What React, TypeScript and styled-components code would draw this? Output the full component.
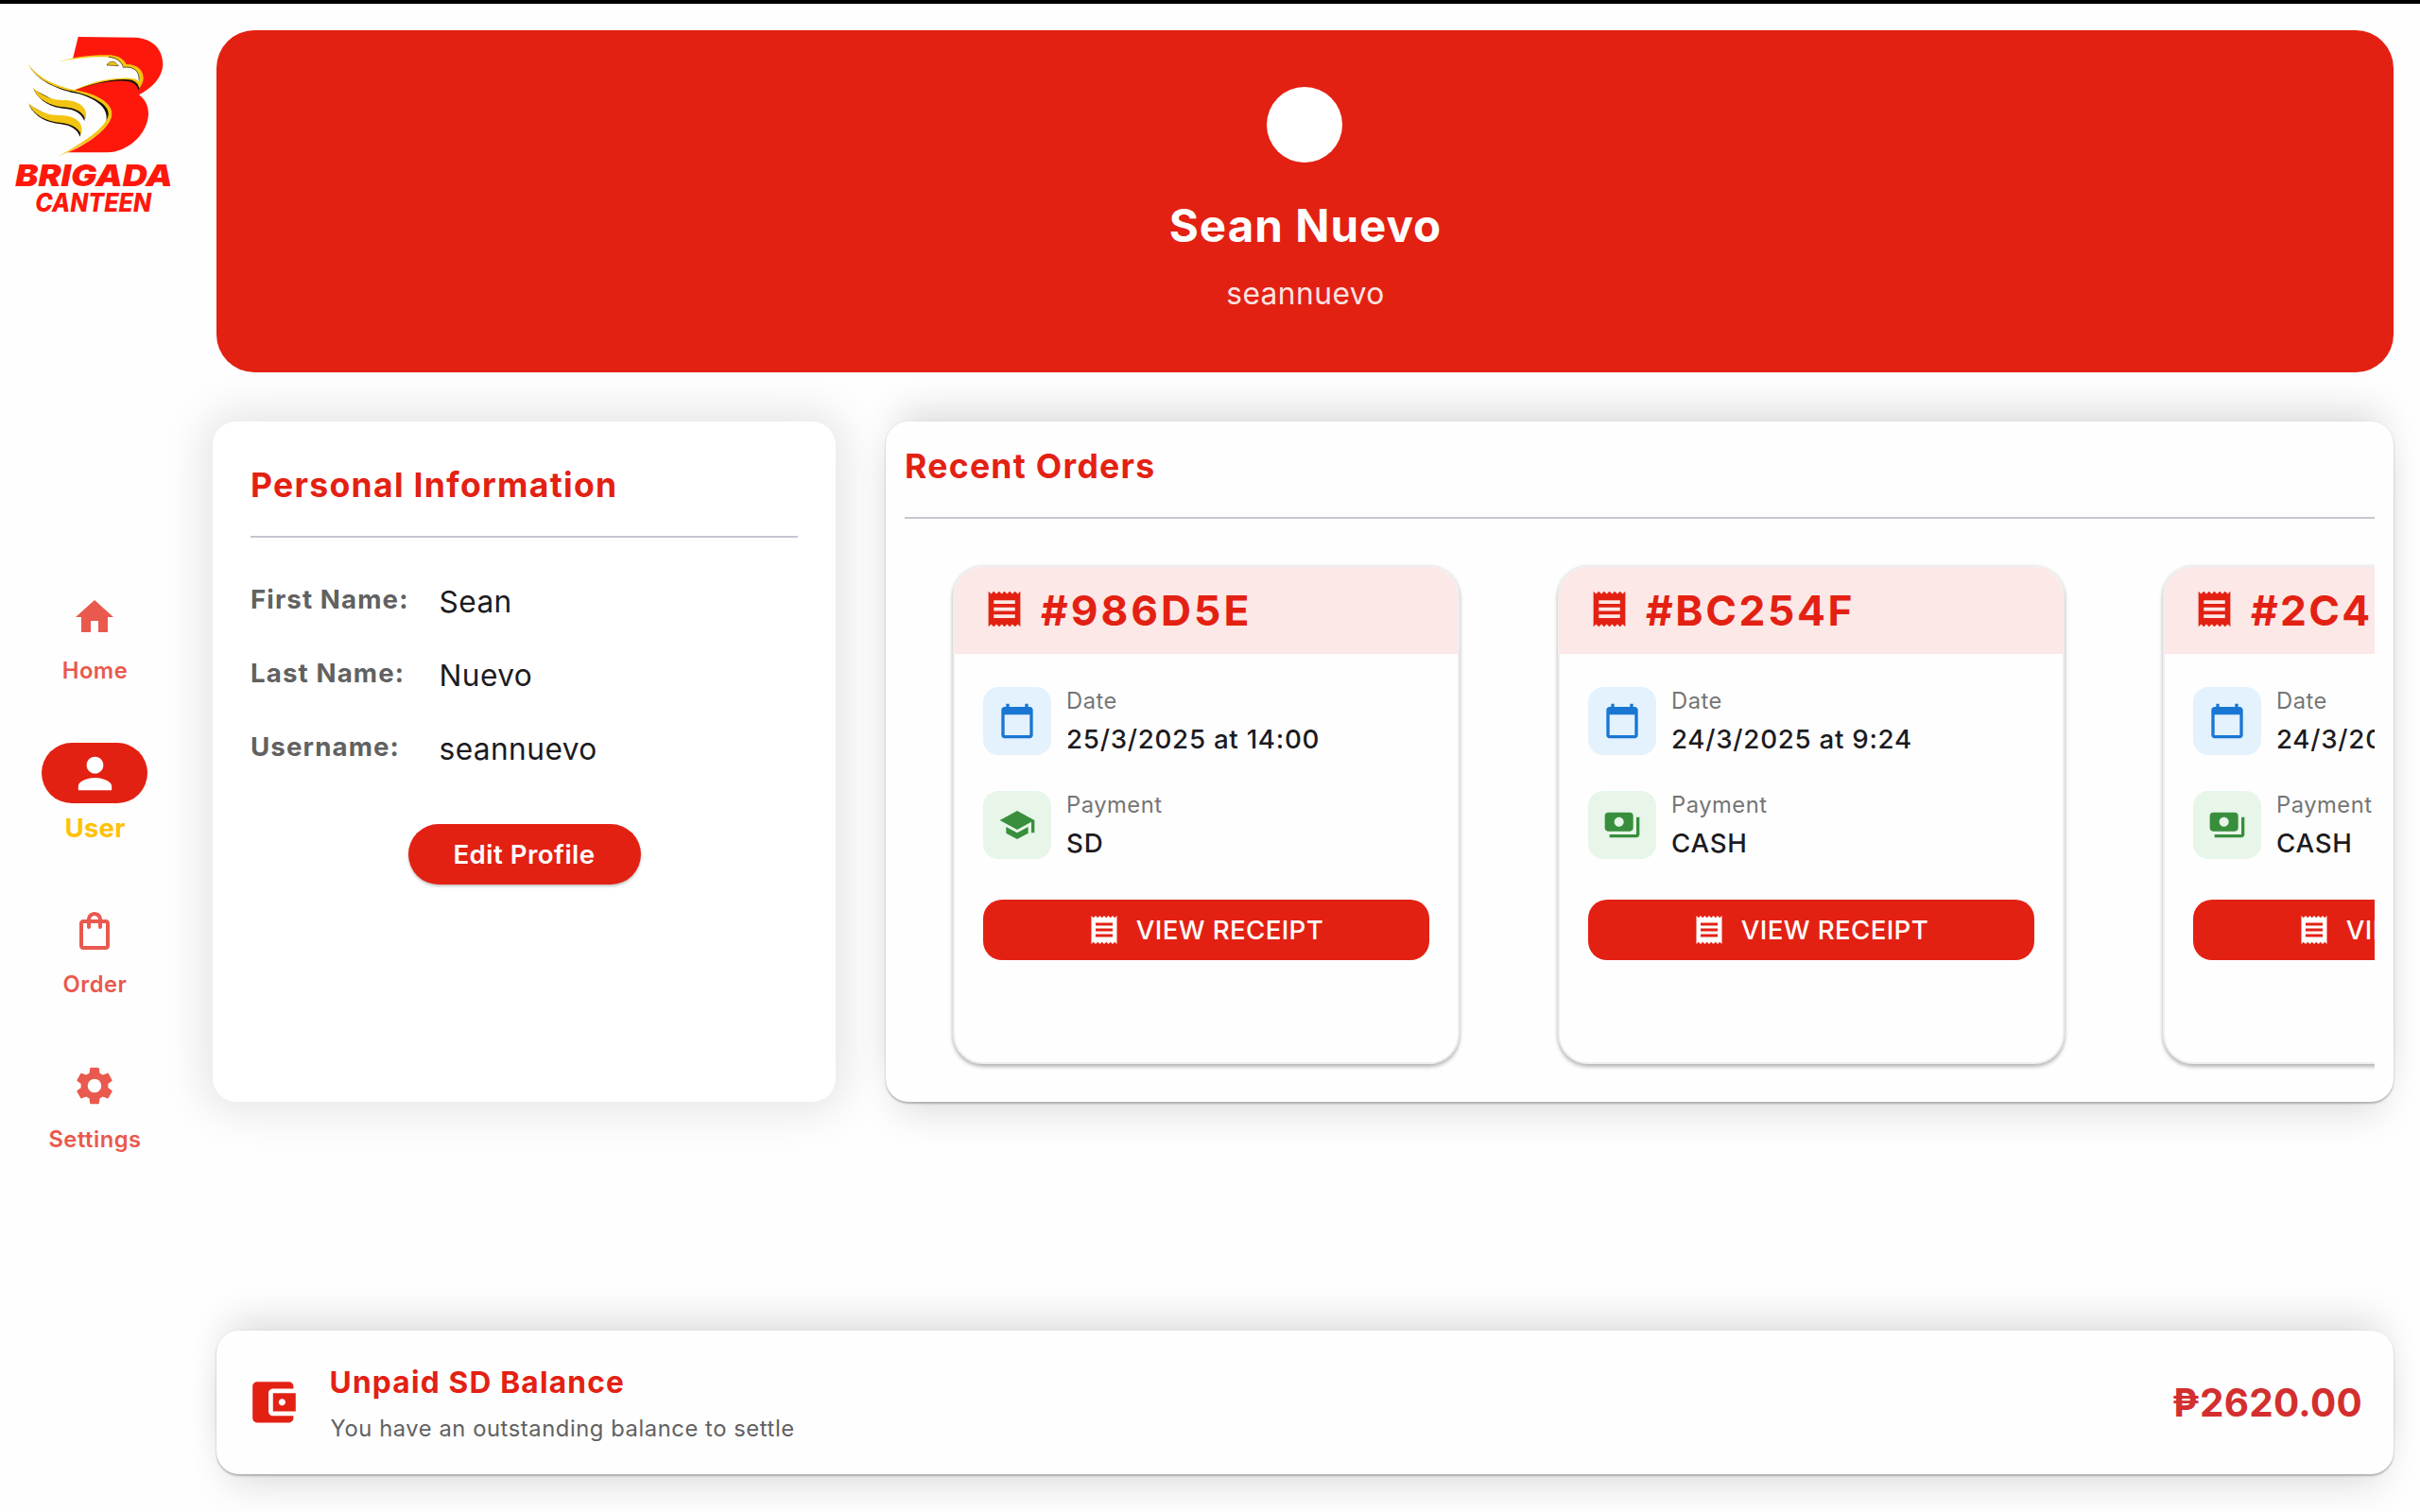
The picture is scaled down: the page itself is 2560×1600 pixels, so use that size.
import React from "react";
import styled, { createGlobalStyle, css } from "styled-components";

const RED = "#e32113";

const GlobalStyle = createGlobalStyle`
  *, *::before, *::after { box-sizing: border-box; }
  body {
    margin: 0;
    background: #fefefe;
    font-family: Inter, "Liberation Sans", sans-serif;
    color: #1c1b1f;
    font-kerning: normal;
  }
  p, h1, h2, h3 { margin: 0; }
`;

/* ---------- icons ---------- */

const icons = {
  home: "M10 20v-6h4v6h5v-8h3L12 3 2 12h3v8z",
  person:
    "M12 12c2.21 0 4-1.79 4-4s-1.79-4-4-4-4 1.79-4 4 1.79 4 4 4zm0 2c-2.67 0-8 1.34-8 4v2h16v-2c0-2.66-5.33-4-8-4z",
  bag: "M18 6h-2c0-2.21-1.79-4-4-4S8 3.79 8 6H6c-1.1 0-2 .9-2 2v12c0 1.1.9 2 2 2h12c1.1 0 2-.9 2-2V8c0-1.1-.9-2-2-2zm-6-2c1.1 0 2 .9 2 2h-4c0-1.1.9-2 2-2zm6 16H6V8h2v2c0 .55.45 1 1 1s1-.45 1-1V8h4v2c0 .55.45 1 1 1s1-.45 1-1V8h2v12z",
  settings:
    "M19.14 12.94c.04-.3.06-.61.06-.94 0-.32-.02-.64-.07-.94l2.03-1.58c.18-.14.23-.41.12-.61l-1.92-3.32c-.12-.22-.37-.29-.59-.22l-2.39.96c-.5-.38-1.03-.7-1.62-.94l-.36-2.54c-.04-.24-.24-.41-.48-.41h-3.84c-.24 0-.43.17-.47.41l-.36 2.54c-.59.24-1.13.57-1.62.94l-2.39-.96c-.22-.08-.47 0-.59.22L2.74 8.87c-.12.21-.08.47.12.61l2.03 1.58c-.05.3-.09.63-.09.94s.02.64.07.94l-2.03 1.58c-.18.14-.23.41-.12.61l1.92 3.32c.12.22.37.29.59.22l2.39-.96c.5.38 1.03.7 1.62.94l.36 2.54c.05.24.24.41.48.41h3.84c.24 0 .44-.17.47-.41l.36-2.54c.59-.24 1.13-.56 1.62-.94l2.39.96c.22.08.47 0 .59-.22l1.92-3.32c.12-.22.07-.47-.12-.61l-2.01-1.58zM12 15.6c-1.98 0-3.6-1.62-3.6-3.6s1.62-3.6 3.6-3.6 3.6 1.62 3.6 3.6-1.62 3.6-3.6 3.6z",
  receipt:
    "M18 17H6v-2h12v2zm0-4H6v-2h12v2zm0-4H6V7h12v2zM3 22l1.5-1.5L6 22l1.5-1.5L9 22l1.5-1.5L12 22l1.5-1.5L15 22l1.5-1.5L18 22l1.5-1.5L21 22V2l-1.5 1.5L18 2l-1.5 1.5L15 2l-1.5 1.5L12 2l-1.5 1.5L9 2 7.500 3.500 6 2 4.500 3.500 3 2v20z",
  calendar:
    "M20 3h-1V1h-2v2H7V1H5v2H4c-1.1 0-2 .9-2 2v16c0 1.1.9 2 2 2h16c1.1 0 2-.9 2-2V5c0-1.1-.9-2-2-2zm0 18H4V8h16v13z",
  school:
    "M5 13.18v4L12 21l7-3.82v-4L12 17l-7-3.82zM12 3L1 9l11 6 9-4.91V17h2V9L12 3z",
  payments:
    "M19 14V6c0-1.1-.9-2-2-2H3c-1.1 0-2 .9-2 2v8c0 1.1.9 2 2 2h14c1.1 0 2-.9 2-2zm-9-1c-1.66 0-3-1.34-3-3s1.34-3 3-3 3 1.34 3 3-1.34 3-3 3zm13-6v11c0 1.1-.9 2-2 2H4v-2h17V7h2z",
  wallet:
    "M21 18v1c0 1.1-.9 2-2 2H5c-1.11 0-2-.9-2-2V5c0-1.1.89-2 2-2h14c1.1 0 2 .9 2 2v1h-9c-1.11 0-2 .9-2 2v8c0 1.1.89 2 2 2h9zm-9-2h10V8H12v8zm4-2.5c-.83 0-1.5-.67-1.5-1.500s.67-1.5 1.500-1.500 1.500.67 1.500 1.500-.67 1.500-1.500 1.500z",
};

type IconName = keyof typeof icons;

const Glyph = styled.svg<{ $size: number }>`
  display: block;
  flex: none;
  width: ${(p) => p.$size}px;
  height: ${(p) => p.$size}px;
  fill: currentColor;
`;

const Icon = ({ name, size }: { name: IconName; size: number }) => (
  <Glyph $size={size} viewBox="0 0 24 24" aria-hidden>
    <path d={icons[name]} />
  </Glyph>
);

/* ---------- shell ---------- */

const Screen = styled.div`
  display: flex;
  width: 2560px;
  height: 1600px;
  overflow: hidden;
  border-top: 4px solid #000;
  background: #fefefe;
`;

const Sidebar = styled.aside`
  display: flex;
  flex-direction: column;
  align-items: center;
  flex: none;
  width: 200px;
`;

const Main = styled.main`
  display: flex;
  flex-direction: column;
  flex: none;
  width: 2303px;
  margin-left: 29px;
  padding-top: 28px;
`;

/* ---------- logo ---------- */

const LogoArt = styled.svg`
  display: block;
  flex: none;
  width: 200px;
  height: 236px;
`;

const LogoText = styled.text`
  font-family: Inter, "Liberation Sans", sans-serif;
  font-style: italic;
  fill: #fe180c;
`;

const Logo = () => (
  <LogoArt viewBox="0 12 600 708" role="img" aria-label="Brigada Canteen">
    {/* the red letter B */}
    <path
      fill="#fe180c"
      d="M248 117 L430 119 C486 122 517 158 517 205 C515 248 482 280 441 301 C462 316 471 338 471 362 C468 428 405 482 340 484 L214 484 C285 455 354 400 354 362 C352 325 300 303 232 287 L231 187 Z"
    />
    {/* eagle head */}
    <path
      fill="#1a1208"
      d="M236 288 C285 268 350 255 395 257 C422 258 434 268 440 287 L445 262 L400 248 L300 262 Z"
    />
    <path
      fill="#f3c512"
      d="M184 197 C235 180 295 173 350 175 C378 177 394 190 401 204 C436 204 457 224 455 252 C453 264 448 272 442 280 C438 262 424 252 398 252 C345 250 285 268 232 288 L225 280 Z"
    />
    <path
      fill="#fefefe"
      d="M190 196 C245 183 305 179 348 182 C372 185 386 198 393 214 C425 212 446 228 441 258 C430 246 400 246 370 249 C315 253 272 270 232 287 C180 272 130 250 86 200 L140 180 Z"
    />
    <path
      fill="none"
      stroke="#1a1208"
      strokeWidth="2"
      d="M345 181 C372 183 386 196 391 214 C424 209 443 226 441 254"
    />
    <path
      fill="#f3c512"
      stroke="#4a3a10"
      strokeWidth="2"
      d="M339 207 C343 198 353 194 364 197 L376 209 Z"
    />
    {/* wing edge */}
    <path
      fill="#1a1208"
      d="M94 212 C130 258 180 278 238 290 C305 304 352 325 346 368 L336 392 C348 345 312 318 250 298 C185 285 128 262 94 212 Z"
    />
    <path
      fill="#f3c512"
      d="M87 201 C125 252 180 274 238 286 C308 298 357 328 355 362 C352 405 285 455 183 497 C262 453 340 405 344 362 C346 333 300 307 238 291 C175 280 118 255 87 201 Z"
    />
    {/* feathers */}
    <path
      fill="#1a1208"
      d="M107 284 C125 322 165 341 205 345 C240 348 258 360 268 384 L270 370 C255 338 225 335 195 330 Z"
    />
    <path
      fill="#f3c512"
      d="M105 278 C130 303 168 319 205 318 C252 318 282 345 271 377 C258 350 235 343 203 340 C160 336 120 318 105 278 Z"
    />
    <path
      fill="#1a1208"
      d="M92 333 C110 371 150 390 192 394 C226 398 244 410 254 434 L257 418 C242 388 210 382 180 380 Z"
    />
    <path
      fill="#f3c512"
      d="M90 326 C116 351 154 367 192 366 C240 367 268 390 258 427 C244 400 222 393 190 389 C147 384 106 366 90 326 Z"
    />
    <LogoText
      x="49"
      y="591"
      fontSize="94"
      fontWeight="900"
      textLength="499"
      lengthAdjust="spacingAndGlyphs"
    >
      BRIGADA
    </LogoText>
    <LogoText
      x="112"
      y="671"
      fontSize="80"
      fontWeight="800"
      textLength="368"
      lengthAdjust="spacingAndGlyphs"
    >
      CANTEEN
    </LogoText>
  </LogoArt>
);

/* ---------- navigation ---------- */

const Nav = styled.nav`
  display: flex;
  flex-direction: column;
  align-items: center;
  gap: 58px;
  margin-top: 381px;
`;

const NavIcon = styled.span`
  display: flex;
  align-items: center;
  justify-content: center;
  width: 112px;
  height: 64px;
  border-radius: 32px;
`;

const NavLabel = styled.span`
  margin-top: 8px;
  padding-left: 1px;
  font-size: 23.75px;
  line-height: 34px;
  font-weight: 600;
  letter-spacing: 0.5px;
`;

const NavItem = styled.a<{ $active?: boolean }>`
  display: flex;
  flex-direction: column;
  align-items: center;
  color: #e9594e;
  ${(p) =>
    p.$active &&
    css`
      margin: 1px 0 -1px;
      color: #ffc107;
      ${NavIcon} {
        background: ${RED};
        color: #fff;
      }
      ${NavLabel} {
        margin-top: 6px;
        font-size: 27.7px;
        line-height: 40px;
        font-weight: 700;
        letter-spacing: 0.15px;
      }
    `}
`;

/* ---------- profile banner ---------- */

const Banner = styled.header`
  display: flex;
  flex-direction: column;
  align-items: center;
  height: 362px;
  padding-top: 60px;
  border-radius: 40px;
  background: ${RED};
  color: #fff;
`;

const Avatar = styled.div`
  width: 80px;
  height: 80px;
  margin-right: 1px;
  border-radius: 50%;
  background: #fff;
`;

const BannerName = styled.h1`
  margin-top: 37px;
  padding-left: 1px;
  font-size: 47.5px;
  line-height: 60px;
  font-weight: 700;
  letter-spacing: 1.03px;
`;

const BannerHandle = styled.p`
  margin-top: 22px;
  padding-left: 1px;
  font-size: 31.7px;
  line-height: 40px;
  letter-spacing: 0.45px;
  color: rgba(255, 255, 255, 0.9);
`;

/* ---------- panels ---------- */

const Columns = styled.div`
  display: flex;
  gap: 53px;
  margin: 52px 0 0 -4px;
`;

const raised = css`
  box-shadow: 0 2px 2px rgba(0, 0, 0, 0.24), 0 0 2px rgba(0, 0, 0, 0.08),
    0 22px 40px -12px rgba(0, 0, 0, 0.14), 0 -22px 40px -12px rgba(0, 0, 0, 0.14);
`;

const InfoPanel = styled.section`
  display: flex;
  flex-direction: column;
  flex: none;
  width: 659px;
  height: 720px;
  padding: 46px 40px 0;
  border-radius: 25px;
  background: #fff;
  box-shadow: 0 0 46px 10px rgba(0, 0, 0, 0.1);
`;

const OrdersPanel = styled.section`
  display: flex;
  flex-direction: column;
  flex: none;
  width: 1595px;
  height: 720px;
  padding: 26px 20px 0;
  border-radius: 24px;
  background: #fefefe;
  ${raised}
`;

const PanelTitle = styled.h2`
  padding-bottom: 31px;
  border-bottom: 2px solid #cac4d0;
  font-size: 35.6px;
  line-height: 44px;
  font-weight: 700;
  letter-spacing: 1.28px;
  color: ${RED};
`;

const FieldList = styled.dl`
  display: grid;
  grid-template-columns: 199.5px 1fr;
  row-gap: 40px;
  margin: 49px 0 0;
`;

const FieldName = styled.dt`
  font-size: 27.7px;
  line-height: 32px;
  font-weight: 700;
  letter-spacing: 1.1px;
  color: #616161;
`;

const FieldValue = styled.dd`
  margin: 0;
  font-size: 31.7px;
  line-height: 38px;
  letter-spacing: 0.4px;
`;

const EditButton = styled.button`
  align-self: center;
  width: 246px;
  height: 64px;
  margin-top: 60px;
  padding: 1px 0 0;
  border: 0;
  border-radius: 32px;
  background: ${RED};
  color: #fff;
  font: 600 27.7px/63px Inter, "Liberation Sans", sans-serif;
  letter-spacing: 0.44px;
  box-shadow: 0 2px 3px rgba(0, 0, 0, 0.24);
`;

/* ---------- orders ---------- */

const OrderStrip = styled.div`
  display: flex;
  gap: 104px;
  padding: 49px 0 26px 51px;
  overflow: hidden;
`;

const OrderCardBox = styled.article`
  flex: none;
  width: 536px;
  height: 528px;
  border: 2px solid #eee;
  border-radius: 32px;
  background: #fefefe;
  overflow: hidden;
  box-shadow: 0 3px 4px rgba(0, 0, 0, 0.26), 0 1px 4px rgba(0, 0, 0, 0.08);
`;

const OrderHead = styled.header`
  display: flex;
  align-items: center;
  gap: 16px;
  height: 92px;
  padding-left: 30px;
  background: #fce8e6;
  color: ${RED};
  ${Glyph} {
    margin-bottom: 3px;
  }
`;

const OrderId = styled.h3<{ $spacing: number }>`
  font-size: 44.3px;
  line-height: 56px;
  font-weight: 700;
  letter-spacing: ${(p) => p.$spacing}px;
`;

const OrderBody = styled.div`
  display: flex;
  flex-direction: column;
  padding: 35px 30px 0;
`;

const OrderFact = styled.div`
  display: flex;
  gap: 16px;
  height: 72px;
  margin-bottom: 38px;
`;

const Badge = styled.span<{ $tone: "blue" | "green" }>`
  display: flex;
  align-items: center;
  justify-content: center;
  flex: none;
  width: 72px;
  height: 72px;
  border-radius: 16px;
  background: ${(p) => (p.$tone === "blue" ? "#e3f2fd" : "#e8f5e9")};
  color: ${(p) => (p.$tone === "blue" ? "#1976d2" : "#388e3c")};
`;

const FactLabel = styled.p`
  font-size: 23.75px;
  line-height: 30px;
  letter-spacing: 0.5px;
  color: #757575;
`;

const FactValue = styled.p`
  margin-top: 5px;
  font-size: 27.7px;
  line-height: 40px;
  font-weight: 540;
  letter-spacing: 0.74px;
  white-space: nowrap;
`;

const ReceiptButton = styled.button`
  display: flex;
  align-items: center;
  justify-content: center;
  gap: 16px;
  height: 64px;
  margin-top: 5px;
  padding: 0 2px 0 0;
  border: 0;
  border-radius: 20px;
  background: ${RED};
  color: #fff;
  font: 540 27.7px/40px Inter, "Liberation Sans", sans-serif;
  letter-spacing: 0.36px;
`;

/* ---------- balance ---------- */

const BalanceBar = styled.section`
  display: flex;
  align-items: center;
  height: 152px;
  margin-top: 242px;
  padding: 0 33px 0 31px;
  border-radius: 24px;
  background: #fefefe;
  color: ${RED};
  ${raised}
`;

const BalanceText = styled.div`
  flex: 1;
  margin-left: 31px;
  padding-top: 2px;
`;

const BalanceTitle = styled.h2`
  font-size: 31.7px;
  line-height: 40px;
  font-weight: 700;
  letter-spacing: 1.18px;
`;

const BalanceNote = styled.p`
  margin-top: 14px;
  padding-left: 1px;
  font-size: 23.75px;
  line-height: 30px;
  letter-spacing: 0.57px;
  color: #616161;
`;

const Amount = styled.p`
  padding-top: 2px;
  font-size: 40.4px;
  line-height: 48px;
  font-weight: 700;
  letter-spacing: 0.3px;
  color: #d32f2f;
`;

/* ---------- data ---------- */

const navItems: { label: string; icon: IconName; size: number; active?: boolean }[] = [
  { label: "Home", icon: "home", size: 48 },
  { label: "User", icon: "person", size: 53, active: true },
  { label: "Order", icon: "bag", size: 48 },
  { label: "Settings", icon: "settings", size: 48 },
];

const fields = [
  ["First Name:", "Sean"],
  ["Last Name:", "Nuevo"],
  ["Username:", "seannuevo"],
];

const orders: {
  id: string;
  spacing: number;
  date: string;
  payment: string;
  icon: IconName;
}[] = [
  { id: "#986D5E", spacing: 3, date: "25/3/2025 at 14:00", payment: "SD", icon: "school" },
  { id: "#BC254F", spacing: 2.6, date: "24/3/2025 at 9:24", payment: "CASH", icon: "payments" },
  { id: "#2C4", spacing: 2.3, date: "24/3/2025", payment: "CASH", icon: "payments" },
];

export default function App() {
  return (
    <>
      <GlobalStyle />
      <Screen>
        <Sidebar>
          <Logo />
          <Nav>
            {navItems.map((item) => (
              <NavItem key={item.label} $active={item.active}>
                <NavIcon>
                  <Icon name={item.icon} size={item.size} />
                </NavIcon>
                <NavLabel>{item.label}</NavLabel>
              </NavItem>
            ))}
          </Nav>
        </Sidebar>

        <Main>
          <Banner>
            <Avatar />
            <BannerName>Sean Nuevo</BannerName>
            <BannerHandle>seannuevo</BannerHandle>
          </Banner>

          <Columns>
            <InfoPanel>
              <PanelTitle>Personal Information</PanelTitle>
              <FieldList>
                {fields.map(([name, value]) => (
                  <React.Fragment key={name}>
                    <FieldName>{name}</FieldName>
                    <FieldValue>{value}</FieldValue>
                  </React.Fragment>
                ))}
              </FieldList>
              <EditButton>Edit Profile</EditButton>
            </InfoPanel>

            <OrdersPanel>
              <PanelTitle>Recent Orders</PanelTitle>
              <OrderStrip>
                {orders.map((order) => (
                  <OrderCardBox key={order.id}>
                    <OrderHead>
                      <Icon name="receipt" size={45} />
                      <OrderId $spacing={order.spacing}>{order.id}</OrderId>
                    </OrderHead>
                    <OrderBody>
                      <OrderFact>
                        <Badge $tone="blue">
                          <Icon name="calendar" size={40} />
                        </Badge>
                        <div>
                          <FactLabel>Date</FactLabel>
                          <FactValue>{order.date}</FactValue>
                        </div>
                      </OrderFact>
                      <OrderFact>
                        <Badge $tone="green">
                          <Icon name={order.icon} size={40} />
                        </Badge>
                        <div>
                          <FactLabel>Payment</FactLabel>
                          <FactValue>{order.payment}</FactValue>
                        </div>
                      </OrderFact>
                      <ReceiptButton>
                        <Icon name="receipt" size={36} />
                        VIEW RECEIPT
                      </ReceiptButton>
                    </OrderBody>
                  </OrderCardBox>
                ))}
              </OrderStrip>
            </OrdersPanel>
          </Columns>

          <BalanceBar>
            <Icon name="wallet" size={57.6} />
            <BalanceText>
              <BalanceTitle>Unpaid SD Balance</BalanceTitle>
              <BalanceNote>You have an outstanding balance to settle</BalanceNote>
            </BalanceText>
            <Amount>₱2620.00</Amount>
          </BalanceBar>
        </Main>
      </Screen>
    </>
  );
}
